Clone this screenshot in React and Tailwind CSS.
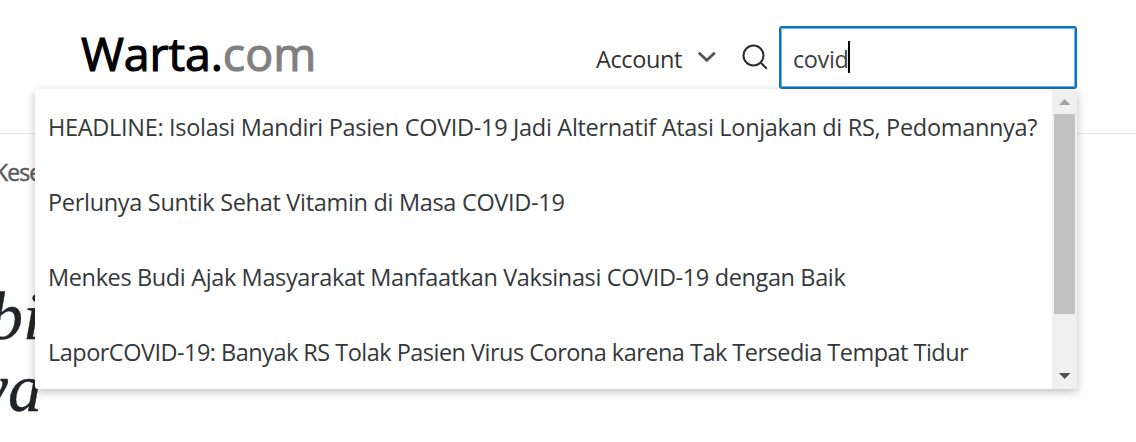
import React from "react";

const results = [
  {
    text: "HEADLINE: Isolasi Mandiri Pasien COVID-19 Jadi Alternatif Atasi Lonjakan di RS, Pedomannya?",
    tracking: "tracking-[-0.31px]",
  },
  { text: "Perlunya Suntik Sehat Vitamin di Masa COVID-19", tracking: "tracking-[-0.31px]" },
  {
    text: "Menkes Budi Ajak Masyarakat Manfaatkan Vaksinasi COVID-19 dengan Baik",
    tracking: "tracking-[-0.37px]",
  },
  {
    text: "LaporCOVID-19: Banyak RS Tolak Pasien Virus Corona karena Tak Tersedia Tempat Tidur",
    tracking: "tracking-[-0.52px]",
  },
];

function Logo() {
  return (
    <div className="ml-[81px] w-[515px] whitespace-nowrap pt-[21px] text-[46.5px] leading-[64px] text-black [-webkit-text-stroke:1.1px_currentColor]">
      <span className="tracking-[-0.1px]">Warta.</span>
      <span className="tracking-[0.1px] text-[#808080]">com</span>
    </div>
  );
}

function Header() {
  return (
    <header className="flex h-[134px] items-start border-b border-[#e3e4e6]">
      <Logo />
      <div className="flex w-[183px] shrink-0 pt-[41px] text-[#333]">
        <span className="w-[101px] text-[23.5px] leading-9 tracking-[-0.4px]">Account</span>
        <svg className="mt-[9px] h-3 w-[19px]" viewBox="0 0 19 12" fill="none" stroke="#50545a" strokeWidth="2.8">
          <path d="M1.8 2.8 9.8 10.2 17.8 2.8" />
        </svg>
        <svg className="ml-[25px] mt-[2px] h-7 w-7" viewBox="0 0 28 28" fill="none" stroke="#2b2d30" strokeWidth="2">
          <circle cx="12.5" cy="12.5" r="10" />
          <path d="m19.6 19.6 6.2 6.2" />
        </svg>
      </div>
      <div className="mt-[26px] flex h-[63px] w-[298px] shrink-0 items-center rounded-[3px] border-2 border-[#1273bf] pl-3 shadow-[inset_0_0_0_1px_#69b3ee]">
        <div className="h-full w-full pt-[13px] text-[23.5px] leading-9 tracking-[-0.4px] text-[#3b3f44]">
          <span className="inline-block w-[55px] whitespace-nowrap">covid</span>
          <span className="inline-block h-8 w-[2px] bg-black align-[-5px]" />
        </div>
      </div>
    </header>
  );
}

function Scrollbar() {
  return (
    <div className="flex w-[25px] shrink-0 flex-col items-center bg-[#f0f0f0]">
      <svg className="h-[25px] w-[25px] shrink-0" viewBox="0 0 25 25">
        <path d="M7 16h11.5L12.7 10z" fill="#a3a3a3" />
      </svg>
      <div className="h-[200px] w-[21px] bg-[#c1c1c1]" />
      <svg className="mt-auto h-[25px] w-[25px] shrink-0" viewBox="0 0 25 25">
        <path d="M7 9h11.5l-5.8 6z" fill="#505050" />
      </svg>
    </div>
  );
}

export default function App() {
  return (
    <div className="relative h-[442px] w-[1136px] overflow-hidden bg-white font-['Open_Sans',sans-serif]">
      <Header />
      <nav className="ml-[-6px] pt-5 text-[23px] leading-9 tracking-[-0.9px] text-[#5c5c5c] [-webkit-text-stroke:0.5px_#5c5c5c]">
        Kesehatan
      </nav>
      <h1 className="flex flex-col pt-[90px] font-['Liberation_Serif',serif] text-[68px] italic leading-[72px] text-[#202328] [-webkit-text-stroke:0.4px_#202328]">
        <span className="ml-[-11px] w-[60px]">bi</span>
        <span className="flex w-[42px] justify-end">ya</span>
      </h1>
      <div className="absolute left-[35px] top-[89px] flex h-[300px] w-[1042px] overflow-hidden rounded-[3px] bg-white shadow-[0_3px_10px_rgba(0,0,0,0.25)]">
        <ul className="min-w-0 flex-1 pl-[13px] text-[23.5px] text-[#35383b]">
          {results.map((r) => (
            <li key={r.text} className={`flex h-[75px] items-center whitespace-nowrap pb-px pt-[3px] ${r.tracking}`}>
              {r.text}
            </li>
          ))}
        </ul>
        <Scrollbar />
      </div>
    </div>
  );
}
